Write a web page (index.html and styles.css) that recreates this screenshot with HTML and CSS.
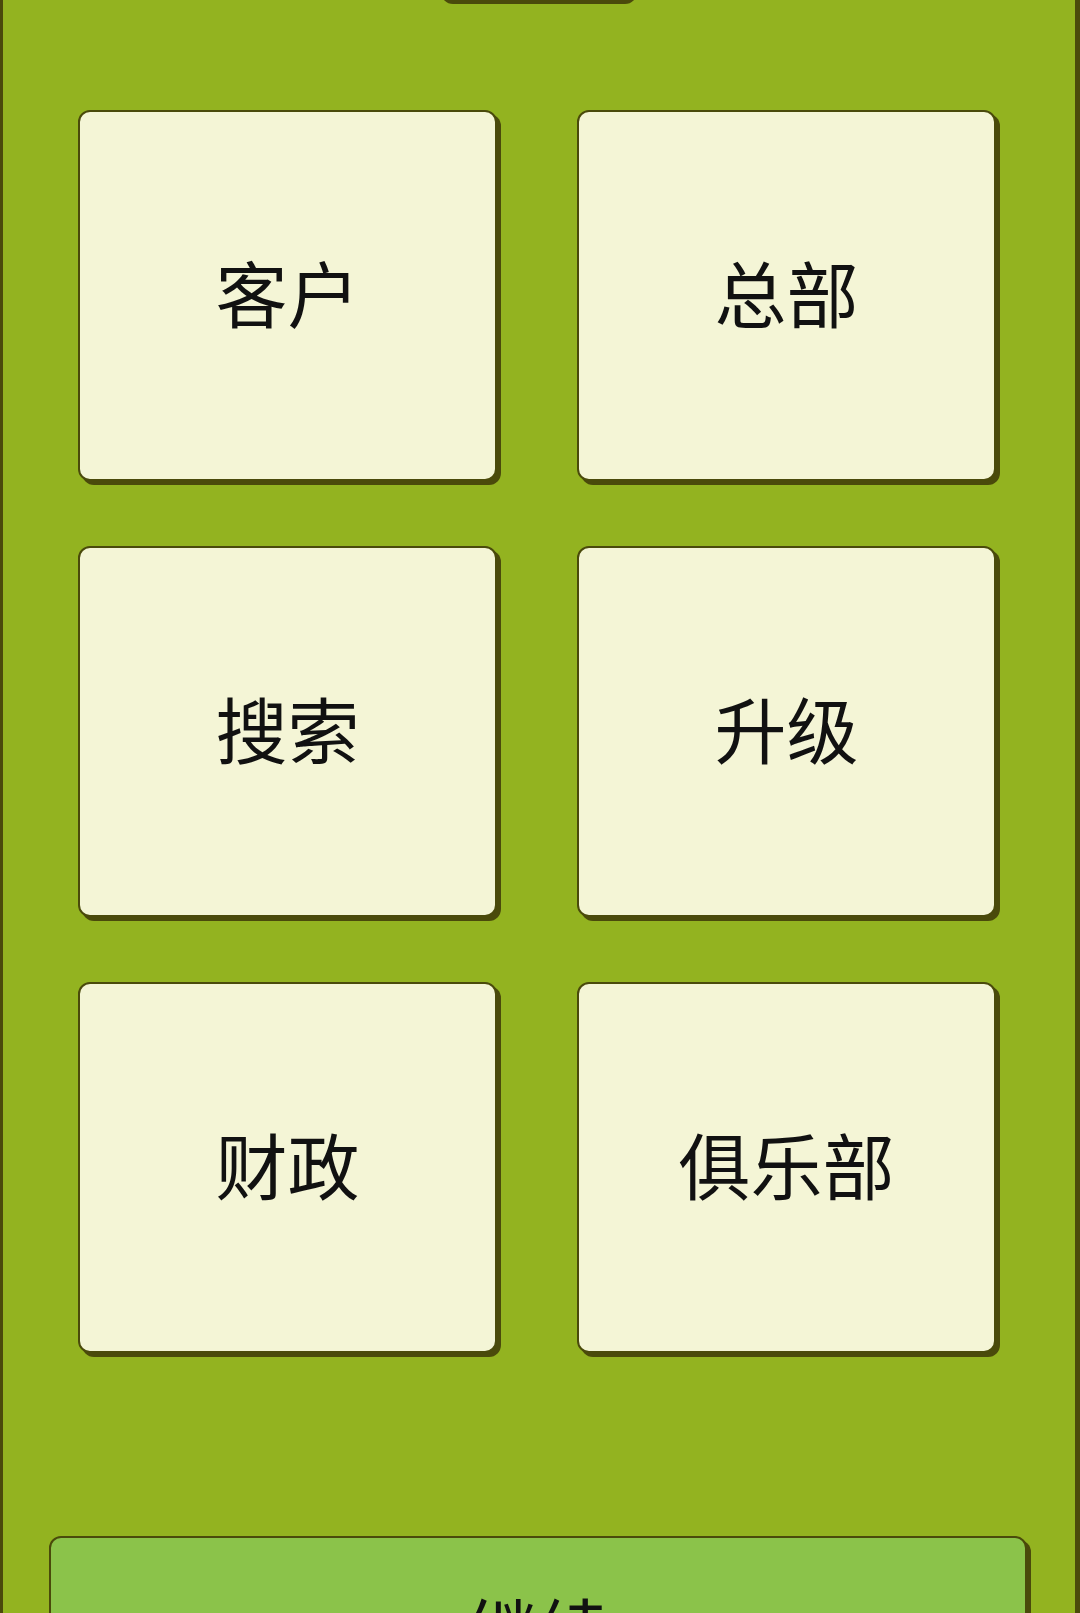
FILE: index.html
```html
<!DOCTYPE html>
<html lang="zh-CN">
<head>
<meta charset="utf-8">
<title>菜单</title>
<link rel="stylesheet" href="styles.css">
</head>
<body>
<div class="screen">
  <div class="tab"></div>
  <div class="grid">
    <div class="card">客户</div>
    <div class="card">总部</div>
    <div class="card">搜索</div>
    <div class="card">升级</div>
    <div class="card">财政</div>
    <div class="card">俱乐部</div>
  </div>
  <div class="continue">继续</div>
</div>
</body>
</html>
```
FILE: styles.css
```css
html, body {
  margin: 0;
  padding: 0;
  background: #93b320;
  overflow: hidden;
}
.screen {
  height: 1613px;
  box-sizing: border-box;
  background: #93b320;
  border-left: 3px solid #4a4a0b;
  border-right: 5px solid #4a4a0b;
  font-family: "Noto Sans CJK SC", "Noto Sans", sans-serif;
  color: #111111;
  display: flex;
  flex-direction: column;
}
.tab {
  width: 196px;
  height: 50px;
  margin: -46px auto 0;
  background: #4a4a0b;
  border-radius: 12px;
  flex: none;
}
.grid {
  display: grid;
  grid-template-columns: 1fr 1fr;
  grid-auto-rows: 371px;
  column-gap: 80px;
  row-gap: 65px;
  padding: 106px 79px 0 75px;
}
.card {
  box-sizing: border-box;
  padding-bottom: 10px;
  background: #f4f5d6;
  border: 2px solid #4a4a0b;
  border-radius: 12px;
  box-shadow: 4px 4px 0 #4a4a0b;
  display: flex;
  align-items: center;
  justify-content: center;
  font-size: 72px;
  line-height: 1;
}
.continue {
  flex: none;
  margin: 183px 48px 0 46px;
  height: 180px;
  background: #8bc34a;
  border: 2px solid #4a4a0b;
  border-radius: 12px;
  box-shadow: 4px 4px 0 #4a4a0b;
  display: flex;
  align-items: center;
  justify-content: center;
  font-size: 72px;
  line-height: 1;
}
```
